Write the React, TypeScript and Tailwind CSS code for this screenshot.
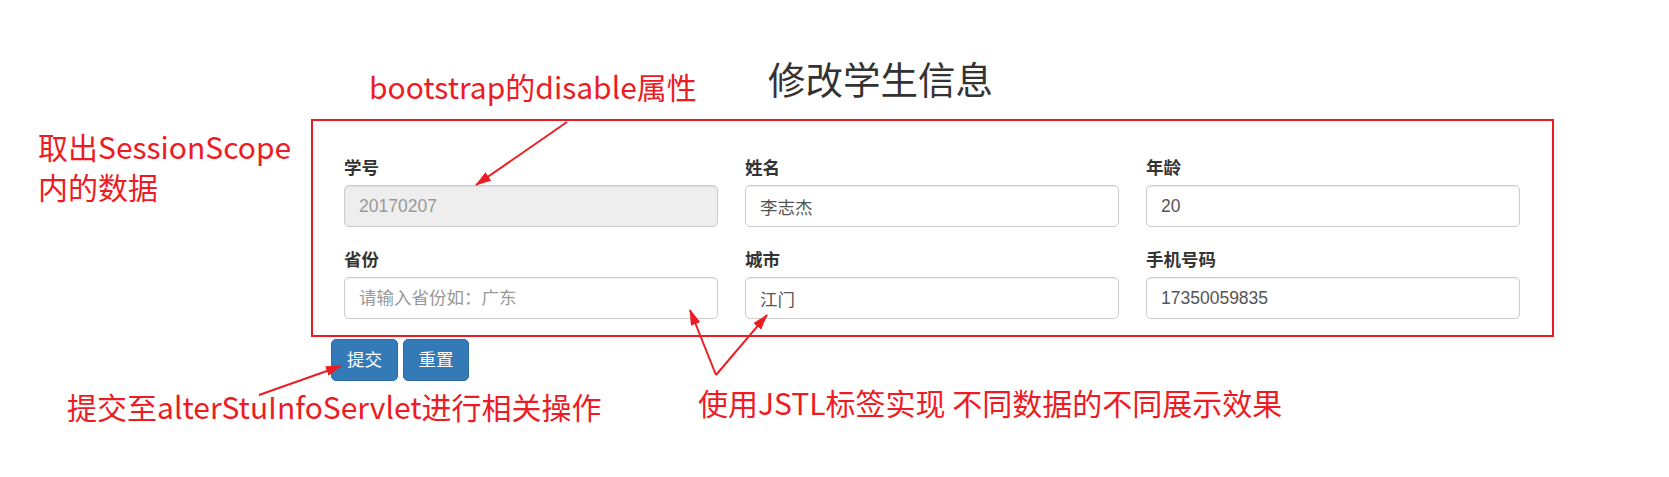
import React from "react";

const fields = [
  { label: "学号", value: "20170207", disabled: true },
  { label: "姓名", value: "李志杰" },
  { label: "年龄", value: "20" },
  { label: "省份", placeholder: "请输入省份如：广东" },
  { label: "城市", value: "江门" },
  { label: "手机号码", value: "17350059835" },
];

const pageFont = { fontFamily: '"Liberation Sans", "Noto Sans CJK SC", sans-serif' };
const noteFont = { fontFamily: '"Noto Sans CJK SC", "Noto Sans", sans-serif' };

function Arrows() {
  return (
    <svg className="pointer-events-none absolute left-0 top-0" width="1669" height="477">
      <defs>
        <marker id="head" markerWidth="16" markerHeight="10" refX="15" refY="5" orient="auto" markerUnits="userSpaceOnUse">
          <path d="M0,0 L16,5 L0,10 Z" fill="#ed1c24" />
        </marker>
      </defs>
      <g stroke="#ed1c24" strokeWidth="2" fill="none">
        <line x1="567" y1="122" x2="476" y2="185" markerEnd="url(#head)" />
        <line x1="259" y1="395" x2="341" y2="366" markerEnd="url(#head)" />
        <line x1="716" y1="375" x2="690" y2="310" markerEnd="url(#head)" />
        <line x1="716" y1="375" x2="767" y2="315" markerEnd="url(#head)" />
      </g>
    </svg>
  );
}

export default function App() {
  return (
    <div className="relative h-[477px] w-[1669px] overflow-hidden bg-white" style={pageFont}>
      {/* Page */}
      <div className="pt-[61px]">
        <h2 className="ml-[768px] h-[41px] text-[37.5px] leading-[41px] font-normal text-[#333]">修改学生信息</h2>

        <form className="ml-[311px] mt-[17px] w-[1243px] border-2 border-[#ed1c24] pt-[35px] pb-[16px] pl-[31px] pr-[32px]">
          <div className="grid grid-cols-3 gap-x-[27px] gap-y-[21px]">
            {fields.map((f) => (
              <div key={f.label}>
                <label className="mb-[4px] block h-[25px] text-[17.5px] leading-[25px] font-bold text-[#333]">
                  {f.label}
                </label>
                <input
                  readOnly
                  disabled={f.disabled}
                  defaultValue={f.value}
                  placeholder={f.placeholder}
                  className={
                    "block h-[42px] w-full rounded-[5px] border border-[#ccc] px-[14px] text-[17.5px] outline-none shadow-[inset_0_1px_1px_rgba(0,0,0,0.075)] placeholder:text-[#999] " +
                    (f.disabled ? "bg-[#eee] text-[#999]" : "bg-white text-[#555]")
                  }
                />
              </div>
            ))}
          </div>
        </form>

        <div className="ml-[331px] mt-[2px] flex gap-[5px]">
          <button className="h-[42px] w-[67px] rounded-[5px] border border-[#2e6da4] bg-[#337ab7] text-[17.5px] text-white">提交</button>
          <button className="h-[42px] w-[66px] rounded-[5px] border border-[#2e6da4] bg-[#337ab7] text-[17.5px] text-white">重置</button>
        </div>
      </div>

      {/* Annotations */}
      <div className="absolute left-[369px] top-[66px] text-[30px] leading-[41px] text-[#ed1c24]" style={noteFont}>
        bootstrap的disable属性
      </div>
      <div className="absolute left-[38px] top-[126px] text-[30px] leading-[40px] text-[#ed1c24]" style={noteFont}>
        <div>取出SessionScope</div>
        <div>内的数据</div>
      </div>
      <div className="absolute left-[67px] top-[386px] text-[30px] leading-[41px] text-[#ed1c24]" style={noteFont}>
        提交至alterStuInfoServlet进行相关操作
      </div>
      <div className="absolute left-[698px] top-[382px] text-[30px] leading-[41px] text-[#ed1c24]" style={noteFont}>
        使用JSTL标签实现 不同数据的不同展示效果
      </div>

      <Arrows />
    </div>
  );
}
